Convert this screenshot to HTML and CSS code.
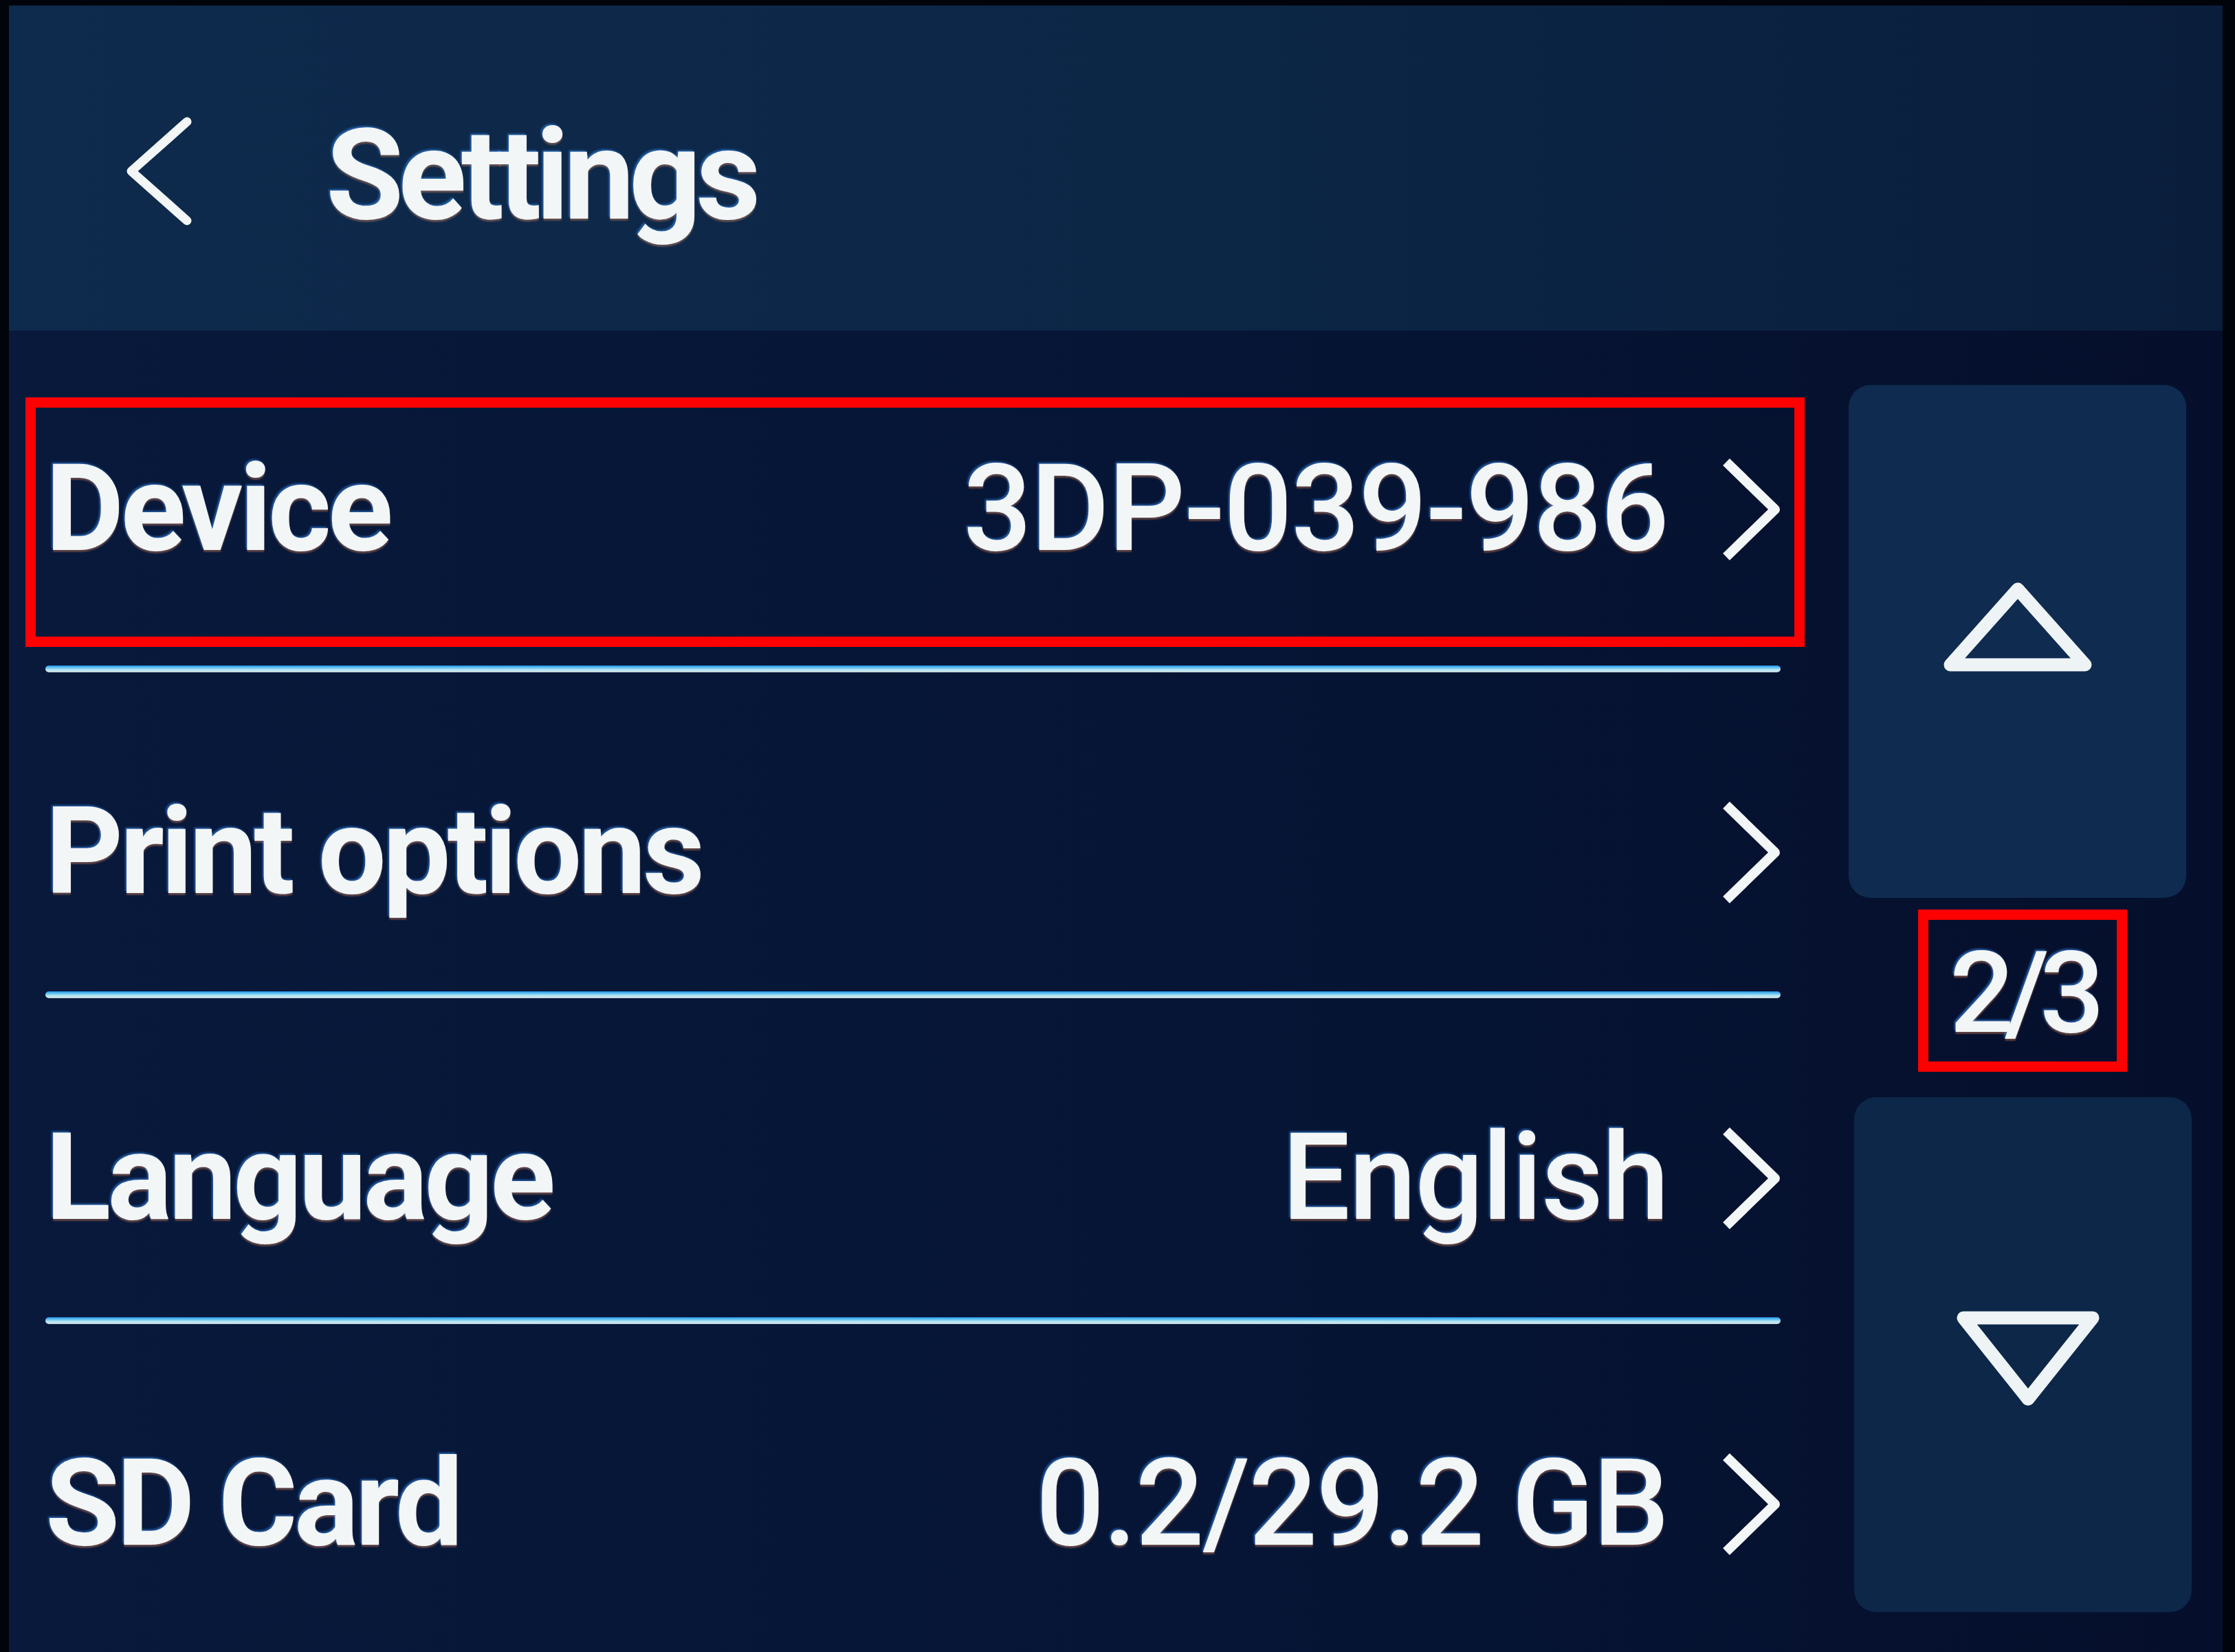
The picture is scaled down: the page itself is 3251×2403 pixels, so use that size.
FILE: index.html
```html
<!DOCTYPE html>
<html lang="en">
<head>
<meta charset="utf-8">
<title>Settings</title>
<link rel="stylesheet" href="styles.css">
</head>
<body>
<div class="screen">
  <header class="topbar">
    <svg class="back" viewBox="0 0 98 158" aria-hidden="true"><polyline points="90,7 9,79 90,151"/></svg>
    <h1 class="title">Settings</h1>
  </header>
  <div class="content">
    <ul class="menu">
      <li class="row row-first">
        <span class="label">Device</span>
        <span class="value">3DP-039-986</span>
        <svg class="chev" viewBox="0 0 86 152" aria-hidden="true"><polyline points="7,7 78,76 7,145"/></svg>
        <span class="mark mark-row"></span>
      </li>
      <li class="sep"></li>
      <li class="row">
        <span class="label">Print options</span>
        <svg class="chev" viewBox="0 0 86 152" aria-hidden="true"><polyline points="7,7 78,76 7,145"/></svg>
      </li>
      <li class="sep"></li>
      <li class="row">
        <span class="label">Language</span>
        <span class="value">English</span>
        <svg class="chev" viewBox="0 0 86 152" aria-hidden="true"><polyline points="7,7 78,76 7,145"/></svg>
      </li>
      <li class="sep"></li>
      <li class="row">
        <span class="label">SD Card</span>
        <span class="value">0.2/29.2 GB</span>
        <svg class="chev" viewBox="0 0 86 152" aria-hidden="true"><polyline points="7,7 78,76 7,145"/></svg>
      </li>
    </ul>
    <aside class="pager">
      <button class="page-btn page-up" type="button" aria-label="Previous page">
        <svg class="tri" viewBox="0 0 214 128" aria-hidden="true"><polygon points="107,9 205,119 9,119"/></svg>
      </button>
      <div class="page-num">
        <span class="num-box"><span class="num">2/3</span></span>
      </div>
      <button class="page-btn page-down" type="button" aria-label="Next page">
        <svg class="tri" viewBox="0 0 206 136" aria-hidden="true"><polygon points="9,9 197,9 103,127"/></svg>
      </button>
    </aside>
  </div>
</div>
</body>
</html>
```
FILE: styles.css
```css
html, body {
  margin: 0;
  padding: 0;
}
body {
  width: 3251px;
  height: 2403px;
  overflow: hidden;
  background: #02040b;
  font-family: Roboto, "Noto Sans", "Liberation Sans", sans-serif;
  color: #f3f6f7;
}
.screen {
  margin: 8px 0 0 13px;
  width: 3220px;
  height: 2395px;
  display: flex;
  flex-direction: column;
  background: linear-gradient(90deg, #08193b 0%, #061535 55%, #050f2c 100%);
}
.topbar {
  height: 473px;
  flex: none;
  box-sizing: border-box;
  display: flex;
  align-items: center;
  padding: 8px 0 0 169px;
  background: linear-gradient(90deg, #0e2a4c 0%, #0c2646 55%, #0a1e3c 100%);
}
.back {
  width: 98px;
  height: 158px;
  flex: none;
  overflow: visible;
}
.back polyline,
.chev polyline {
  fill: none;
  stroke: #f3f6f7;
  stroke-width: 13;
  stroke-linejoin: round;
  stroke-linecap: round;
}
.title {
  margin: 14px 0 0 194px;
  font-size: 184px;
  font-weight: 700;
  letter-spacing: -8px;
  line-height: 1.17;
  text-shadow: -2px -2px 3px rgba(60, 150, 255, 0.55), 0 3px 2px rgba(255, 150, 90, 0.35);
}
.content {
  flex: 1;
  display: flex;
  padding: 0 53px;
}
.menu {
  list-style: none;
  margin: 0;
  padding: 0;
  width: 2524px;
  flex: none;
}
.row {
  position: relative;
  height: 464px;
  box-sizing: border-box;
  padding-top: 60px;
  display: flex;
  align-items: center;
  font-size: 176px;
  line-height: 1.17;
  text-shadow: -2px -2px 3px rgba(60, 150, 255, 0.55), 0 3px 2px rgba(255, 150, 90, 0.35);
}
.row-first {
  height: 487px;
  padding-top: 33px;
}
.label {
  flex: 1;
  font-weight: 700;
  letter-spacing: -5px;
}
.value {
  font-weight: 500;
  letter-spacing: -2px;
}
.chev {
  flex: none;
  width: 86px;
  height: 152px;
  margin-left: 78px;
  overflow: visible;
}
.chev polyline {
  stroke-width: 14;
  stroke-linecap: butt;
}
.sep {
  height: 10px;
  border-radius: 5px;
  background: linear-gradient(180deg, #1f8ee6 0%, #6cc8f0 35%, #c9e9f2 70%, #b9d6da 100%);
}
.mark {
  position: absolute;
  box-sizing: border-box;
  border: 15px solid #ff0000;
  pointer-events: none;
}
.mark-row {
  left: -29px;
  right: -35px;
  top: 97px;
  bottom: 27px;
}
.pager {
  width: 491px;
  margin-left: 99px;
  flex: none;
  display: flex;
  flex-direction: column;
  padding-top: 79px;
}
.page-btn {
  border: none;
  padding: 0;
  margin: 0;
  border-radius: 32px;
  background: #0f2b50;
  display: flex;
  align-items: center;
  justify-content: center;
  width: 100%;
}
.page-up {
  height: 746px;
}
.page-down {
  height: 749px;
  background: #0d2749;
  margin-left: 8px;
}
.tri {
  overflow: visible;
}
.page-up .tri {
  width: 214px;
  height: 128px;
  margin-top: -42px;
}
.page-down .tri {
  width: 206px;
  height: 136px;
  margin-left: 14px;
  margin-top: 10px;
}
.tri polygon {
  fill: none;
  stroke: #eef4f6;
  stroke-width: 19;
  stroke-linejoin: round;
}
.page-num {
  height: 290px;
  display: flex;
  align-items: flex-start;
  justify-content: center;
  padding-top: 17px;
  box-sizing: border-box;
}
.num-box {
  width: 304px;
  height: 236px;
  box-sizing: border-box;
  border: 15px solid #ff0000;
  margin-left: 14px;
  display: flex;
  align-items: center;
  justify-content: center;
}
.num {
  font-size: 166px;
  font-weight: 500;
  letter-spacing: -14px;
  line-height: 1;
  margin-top: 8px;
  text-shadow: -2px -2px 3px rgba(60, 150, 255, 0.6), 0 3px 2px rgba(255, 150, 90, 0.35);
}
```
